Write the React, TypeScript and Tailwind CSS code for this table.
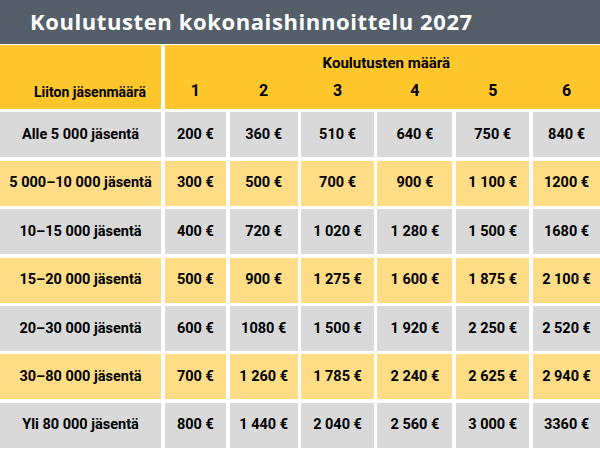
const rows: { label: string; prices: string[]; alt: boolean }[] = [
  { label: "Alle 5 000 jäsentä", prices: ["200 €", "360 €", "510 €", "640 €", "750 €", "840 €"], alt: false },
  { label: "5 000–10 000 jäsentä", prices: ["300 €", "500 €", "700 €", "900 €", "1 100 €", "1200 €"], alt: true },
  { label: "10–15 000 jäsentä", prices: ["400 €", "720 €", "1 020 €", "1 280 €", "1 500 €", "1680 €"], alt: false },
  { label: "15–20 000 jäsentä", prices: ["500 €", "900 €", "1 275 €", "1 600 €", "1 875 €", "2 100 €"], alt: true },
  { label: "20–30 000 jäsentä", prices: ["600 €", "1080 €", "1 500 €", "1 920 €", "2 250 €", "2 520 €"], alt: false },
  { label: "30–80 000 jäsentä", prices: ["700 €", "1 260 €", "1 785 €", "2 240 €", "2 625 €", "2 940 €"], alt: true },
  { label: "Yli 80 000 jäsentä", prices: ["800 €", "1 440 €", "2 040 €", "2 560 €", "3 000 €", "3360 €"], alt: false },
];

const counts = ["1", "2", "3", "4", "5", "6"];

export default function App() {
  return (
    <div className="w-[600px] h-[450px] overflow-hidden bg-white">
      {/* otsikko */}
      <div className="h-[44px] bg-[#545f6a] flex items-center pl-[30px] pb-[3px]">
        <h1 className="text-white font-bold text-[22px] tracking-[0.6px] leading-none font-['Open_Sans',sans-serif]">
          Koulutusten kokonaishinnoittelu 2027
        </h1>
      </div>

      <div className="mt-[1px] grid grid-cols-[161px_61.5px_68px_72.5px_75px_73.5px_1fr] grid-rows-[64px_repeat(7,45px)] gap-x-[3.6px] gap-y-[3.4px] text-black">
        {/* header */}
        <div className="bg-[#ffc72c] flex items-end justify-end pr-[15px] pb-[10px]">
          <span className="font-bold text-[14px] leading-none font-['Roboto',sans-serif]">
            Liiton jäsenmäärä
          </span>
        </div>
        <div className="col-span-6 grid grid-cols-subgrid grid-rows-[1fr_auto] bg-[#ffc72c] font-bold font-['Roboto',sans-serif]">
          <div className="col-span-6 text-center text-[15px] leading-none pt-[11px] pl-[8px]">Koulutusten määrä</div>
          {counts.map((c) => (
            <div key={c} className="text-center text-[16px] leading-none pb-[10px]">
              {c}
            </div>
          ))}
        </div>

        {/* rivit */}
        {rows.map((r) => (
          <>
            <div
              key={r.label}
              className={`${r.alt ? "bg-[#ffdd87]" : "bg-[#d9d9d9]"} flex items-center justify-center font-bold text-[14.5px] font-['Roboto',sans-serif]`}
            >
              {r.label}
            </div>
            {r.prices.map((p, i) => (
              <div
                key={r.label + i}
                className={`${r.alt ? "bg-[#ffdd87]" : "bg-[#d9d9d9]"} flex items-center justify-center font-bold text-[14.5px] font-['Roboto',sans-serif]`}
              >
                {p}
              </div>
            ))}
          </>
        ))}
      </div>
    </div>
  );
}
